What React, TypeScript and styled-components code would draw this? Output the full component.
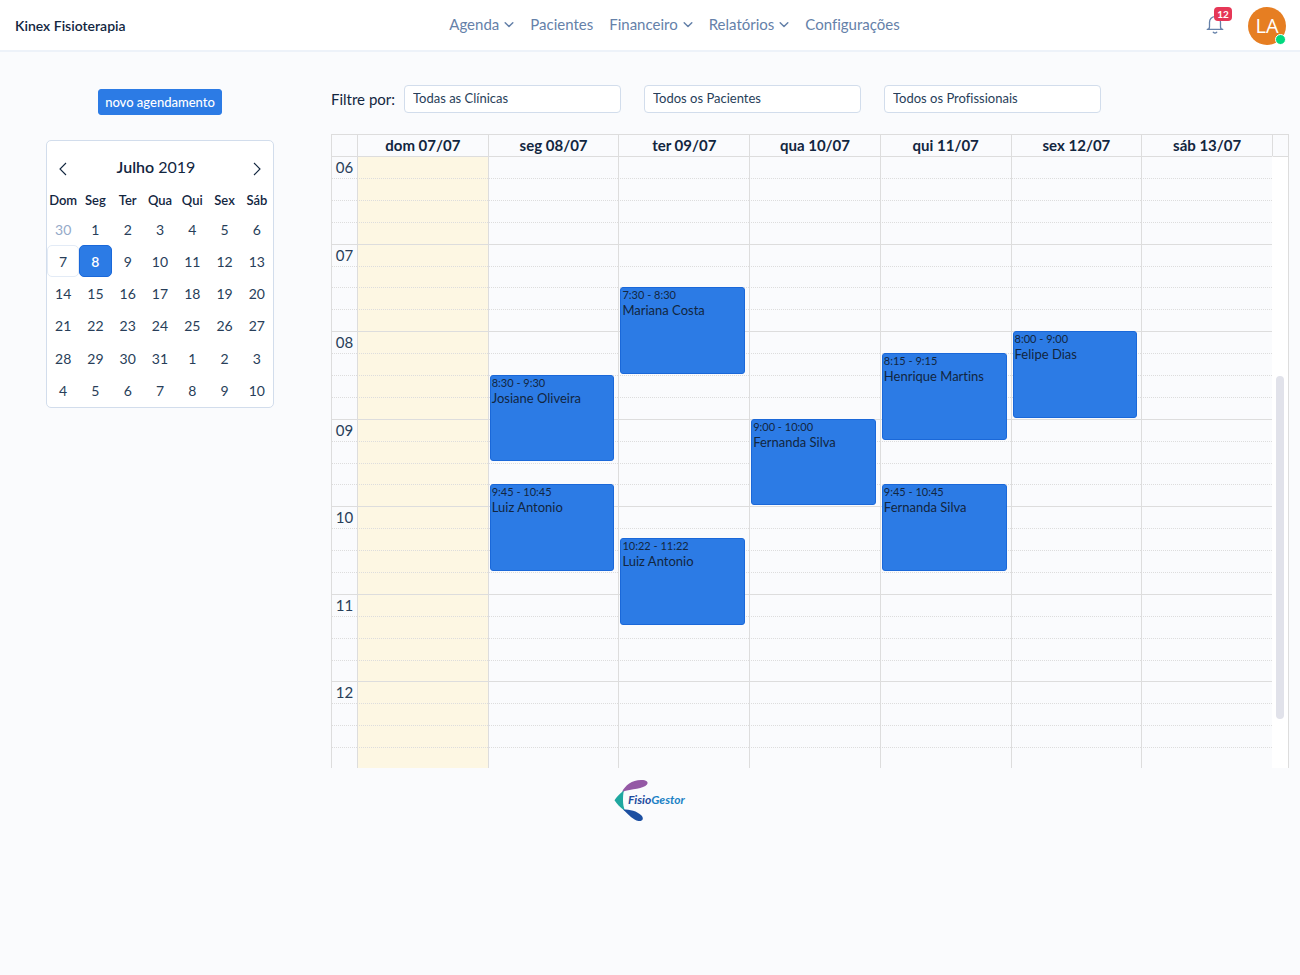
import React from "react";
import styled, { createGlobalStyle, css } from "styled-components";

const ink = "#12263f";
const inkSoft = "#283e59";
const blue = "#2c7be5";
const gridLine = "#dddddd";
const fieldBorder = "#d2ddec";

const GlobalStyle = createGlobalStyle`
  *, *::before, *::after { box-sizing: border-box; }
  body {
    margin: 0;
    background: #fafbfd;
    color: ${ink};
    font-family: Lato, "Open Sans", sans-serif;
    font-size: 15px;
    font-variant-ligatures: none;
    line-height: 20px;
  }
  button, select { font: inherit; color: inherit; }
`;

/* ---------- top bar ---------- */

const TopBar = styled.header`
  display: grid;
  grid-template-columns: 1fr auto 1fr;
  align-items: center;
  height: 52px;
  padding: 0 14px 0 15px;
  background: #fff;
  border-bottom: 2px solid #edf2f9;
`;

const Brand = styled.a`
  color: ${ink};
  font-size: 14px;
  font-weight: 600;
  text-decoration: none;
`;

const Nav = styled.nav`
  display: flex;
  gap: 16px;
  margin-left: 48px;
  padding-bottom: 2px;
`;

const NavLink = styled.a`
  display: flex;
  align-items: center;
  gap: 5px;
  color: #6581a9;
  text-decoration: none;
`;

const Account = styled.div`
  display: flex;
  justify-content: flex-end;
  align-items: center;
  gap: 24px;
  padding-top: 2px;
`;

const BellButton = styled.button`
  position: relative;
  display: flex;
  margin-bottom: 4px;
  padding: 0;
  border: 0;
  background: none;
  color: #6581a9;
`;

const BellCount = styled.span`
  position: absolute;
  top: -7px;
  right: -8px;
  width: 18px;
  height: 14px;
  border-radius: 4px;
  background: #e63757;
  color: #fff;
  font-size: 10px;
  font-weight: 700;
  line-height: 14px;
  text-align: center;
`;

const Avatar = styled.button`
  position: relative;
  width: 38px;
  height: 38px;
  padding: 0;
  border: 0;
  border-radius: 50%;
  background: #e67e22;
  color: #fff;
  font-family: "Open Sans", sans-serif;
  font-size: 20px;
  line-height: 38px;
`;

const Online = styled.span`
  position: absolute;
  right: 0;
  bottom: 0;
  width: 11px;
  height: 11px;
  border: 1px solid #fff;
  border-radius: 50%;
  background: #00d97e;
`;

/* ---------- page ---------- */

const Page = styled.div`
  display: grid;
  grid-template-columns: 320px minmax(0, 1fr);
  padding-top: 33px;
`;

const Sidebar = styled.aside`
  display: flex;
  flex-direction: column;
  align-items: center;
  gap: 25px;
  padding: 4px 46px 0;
`;

const NewButton = styled.button`
  height: 26px;
  padding: 0 6px 1px;
  border: 1px solid ${blue};
  border-radius: 3px;
  background: ${blue};
  color: #fff;
  font-size: 13px;
  font-weight: 500;
  line-height: 22px;
`;

const MiniCalendar = styled.section`
  width: 100%;
  border: 1px solid ${fieldBorder};
  border-radius: 5px;
  background: #fff;
`;

const MonthBar = styled.div`
  display: flex;
  justify-content: space-between;
  align-items: center;
  height: 47px;
  padding: 6px 11px 0;
`;

const MonthTitle = styled.h2`
  margin: 0;
  padding: 0 8px 2px 0;
  font-size: 16px;
  font-weight: 400;

  b { font-weight: 600; }
`;

const MonthArrow = styled.button`
  display: flex;
  padding: 3px 0 0;
  border: 0;
  background: none;
`;

const MonthTable = styled.table`
  display: block;
  color: ${inkSoft};
  font-size: 14px;

  tr {
    display: grid;
    grid-template-columns: repeat(7, 1fr);
  }
  th {
    padding: 0;
    color: ${ink};
    font-size: 13px;
    font-weight: 600;
    line-height: 24px;
  }
  thead, tbody { display: grid; }
  tbody {
    grid-template-rows: repeat(6, 1fr);
    height: 195px;
    padding-top: 1px;
  }
  td { padding: 0; }
`;

const Day = styled.button<{ $kind?: "muted" | "outlined" | "selected" }>`
  width: 100%;
  height: 32px;
  padding: 1px 0 0;
  border: 1px solid transparent;
  border-radius: 5px;
  background: none;
  ${({ $kind }) => $kind === "muted" && css`color: #95aac9;`}
  ${({ $kind }) => $kind === "outlined" && css`border-color: #e3ebf6;`}
  ${({ $kind }) =>
    $kind === "selected" &&
    css`
      border-color: #1a68d9;
      background: ${blue};
      color: #fff;
      font-weight: 600;
    `}
`;

const Main = styled.main`
  display: grid;
  gap: 21px;
  padding: 0 11px;
`;

const Filters = styled.form`
  display: flex;
  align-items: center;
  gap: 23px;
`;

const FilterLabel = styled.label`
  width: 50px;
  white-space: nowrap;
`;

const Filter = styled.select`
  flex: 0 1 217px;
  min-width: 0;
  height: 28px;
  padding: 0 8px 2px;
  border: 1px solid ${fieldBorder};
  border-radius: 4px;
  appearance: none;
  background: #fff;
  color: ${inkSoft};
  font-size: 13px;
`;

/* ---------- week schedule ---------- */

const axisWidth = 26;
const gutterWidth = 17;

const Schedule = styled.div`
  height: 634px;
  overflow: hidden;
  border-right: 1px solid ${gridLine};
`;

const ScheduleBody = styled.div`
  position: relative;
`;

const weekRow = css`
  display: grid;
  grid-template-columns: ${axisWidth}px repeat(7, minmax(0, 1fr)) ${gutterWidth - 1}px;
`;

const WeekTable = styled.table`
  display: block;

  tr { ${weekRow} }
  th, td {
    padding: 0;
    border-left: 1px solid ${gridLine};
  }
  thead { display: block; }
  thead th, thead td {
    height: 22px;
    border-top: 1px solid ${gridLine};
    font-weight: 700;
    line-height: 20px;
  }
  tbody {
    display: grid;
    grid-template-rows: repeat(28, 1fr);
    height: 613px;
  }
`;

const Slot = styled.td<{ $hour: boolean; $today?: boolean }>`
  border-top: 1px ${({ $hour }) => ($hour ? "solid" : "dotted")} ${gridLine};
  background: ${({ $today }) => ($today ? "#fdf7e3" : "transparent")};
`;

const Hour = styled.th<{ $hour: boolean }>`
  border-top: 1px ${({ $hour }) => ($hour ? "solid" : "dotted")} ${gridLine};
  color: ${inkSoft};
  font-weight: 400;
  line-height: 21px;
  text-align: center;
`;

const Gutter = styled.td<{ $first: boolean }>`
  && { border-left-color: #fff; }
  border-top: 1px solid ${({ $first }) => ($first ? gridLine : "#fff")};
  background: #fff;
`;

const Events = styled.div`
  position: absolute;
  inset: auto 0 0;
  height: 613px;
  ${weekRow}
  pointer-events: none;
`;

const EventColumn = styled.div<{ $day: number }>`
  position: relative;
  grid-row: 1;
  grid-column: ${({ $day }) => $day + 2};
`;

const EventCard = styled.a`
  position: absolute;
  left: 2px;
  right: 4px;
  padding: 0 1px;
  border: 1px solid #1a68d9;
  border-radius: 3px;
  background: ${blue};
  color: #12263f;
  font-size: 13px;
  line-height: 16px;
  text-decoration: none;
  pointer-events: auto;

  time {
    display: block;
    font-size: 11px;
    line-height: 14px;
  }
`;

const ScrollThumb = styled.div`
  position: absolute;
  top: 242px;
  right: 4px;
  width: 8px;
  height: 343px;
  border-radius: 4px;
  background: #e1e2ea;
`;

const Footer = styled.footer`
  display: flex;
  justify-content: center;
  padding-top: 10px;
`;

/* ---------- drawings ---------- */

const Chevron = () => (
  <svg width="10" height="10" viewBox="0 0 10 10" fill="none" stroke="currentColor" strokeWidth="1.5" strokeLinecap="round" strokeLinejoin="round" aria-hidden="true">
    <path d="M1.2 3.7 5 7.5l3.8-3.8" />
  </svg>
);

const Arrow = ({ back }: { back?: boolean }) => (
  <svg width="10" height="14" viewBox="0 0 10 14" fill="none" stroke={ink} strokeWidth="1.1" aria-hidden="true">
    <path d={back ? "M8 1 2 7l6 6" : "M2 1l6 6-6 6"} />
  </svg>
);

const Bell = () => (
  <svg width="18" height="20" viewBox="0 0 18 20" fill="none" stroke="currentColor" strokeWidth="1.3" strokeLinecap="round" strokeLinejoin="round" aria-hidden="true">
    <path d="M1.2 15.3h15.6c-1.5 0-2.300-.9-2.300-2.500V8.200a5.500 5.500 0 0 0-11 0v4.600c0 1.600-.8 2.500-2.300 2.500Z" />
    <path d="M7.3 18.2c.9.9 2.500.9 3.400 0" />
  </svg>
);

const Logo = () => (
  <svg width="72" height="44" viewBox="0 0 72 44" role="img" aria-label="FisioGestor">
    <path d="M8 14C11 7.500 18 2 27 2c5-.1 8 2 6 4.500C29.500 11 18 10.500 8 14Z" fill="#9458a5" />
    <path d="M10 12.500C6 15.500 2.500 19 .5 22.300 3 26 6 29.500 11 33 9.500 29 9 25.500 9 22.500S9 16 10 12.500Z" fill="#1fa7a0" />
    <path d="M9 31.500c7 0 14 1.500 18.500 6 2.500 3 1.500 6-3 5.500C19 42 15 37 9 31.500Z" fill="#1c4fa1" />
    <text x="14" y="26" fontFamily="Lato, sans-serif" fontSize="12" fontStyle="italic" fontWeight="700" fill="#1d4b9f">
      Fisio<tspan fill="#1b82c5">Gestor</tspan>
    </text>
  </svg>
);

/* ---------- data ---------- */

const navItems = [
  { label: "Agenda", menu: true },
  { label: "Pacientes", menu: false },
  { label: "Financeiro", menu: true },
  { label: "Relatórios", menu: true },
  { label: "Configurações", menu: false },
];

const filters = ["Todas as Clínicas", "Todos os Pacientes", "Todos os Profissionais"];

const weekdays = ["Dom", "Seg", "Ter", "Qua", "Qui", "Sex", "Sáb"];
const weeks = [
  [30, 1, 2, 3, 4, 5, 6],
  [7, 8, 9, 10, 11, 12, 13],
  [14, 15, 16, 17, 18, 19, 20],
  [21, 22, 23, 24, 25, 26, 27],
  [28, 29, 30, 31, 1, 2, 3],
  [4, 5, 6, 7, 8, 9, 10],
];

const days = ["dom 07/07", "seg 08/07", "ter 09/07", "qua 10/07", "qui 11/07", "sex 12/07", "sáb 13/07"];

const firstHour = 6;
const hoursShown = 7;

const appointments = [
  { day: 1, start: "8:30", end: "9:30", name: "Josiane Oliveira" },
  { day: 1, start: "9:45", end: "10:45", name: "Luiz Antonio" },
  { day: 2, start: "7:30", end: "8:30", name: "Mariana Costa" },
  { day: 2, start: "10:22", end: "11:22", name: "Luiz Antonio" },
  { day: 3, start: "9:00", end: "10:00", name: "Fernanda Silva" },
  { day: 4, start: "8:15", end: "9:15", name: "Henrique Martins" },
  { day: 4, start: "9:45", end: "10:45", name: "Fernanda Silva" },
  { day: 5, start: "8:00", end: "9:00", name: "Felipe Dias" },
];

const offset = (time: string) => {
  const [h, m] = time.split(":").map(Number);
  return ((h - firstHour + m / 60) / hoursShown) * 100;
};

const dayKind = (week: number, day: number) => {
  if (week === 0 && day === 30) return "muted" as const;
  if (week === 1 && day === 7) return "outlined" as const;
  if (week === 1 && day === 8) return "selected" as const;
  return undefined;
};

export default function App() {
  return (
    <>
      <GlobalStyle />
      <TopBar>
        <div><Brand href="#">Kinex Fisioterapia</Brand></div>
        <Nav>
          {navItems.map(({ label, menu }) => (
            <NavLink href="#" key={label}>{label}{menu && <Chevron />}</NavLink>
          ))}
        </Nav>
        <Account>
          <BellButton type="button" aria-label="Notificações">
            <Bell />
            <BellCount>12</BellCount>
          </BellButton>
          <Avatar type="button">LA<Online /></Avatar>
        </Account>
      </TopBar>

      <Page>
        <Sidebar>
          <NewButton type="button">novo agendamento</NewButton>
          <MiniCalendar>
            <MonthBar>
              <MonthArrow type="button" aria-label="Mês anterior"><Arrow back /></MonthArrow>
              <MonthTitle><b>Julho</b> 2019</MonthTitle>
              <MonthArrow type="button" aria-label="Próximo mês"><Arrow /></MonthArrow>
            </MonthBar>
            <MonthTable>
              <thead>
                <tr>{weekdays.map((d) => <th key={d} scope="col">{d}</th>)}</tr>
              </thead>
              <tbody>
                {weeks.map((week, w) => (
                  <tr key={w}>
                    {week.map((d) => (
                      <td key={d}><Day type="button" $kind={dayKind(w, d)}>{d}</Day></td>
                    ))}
                  </tr>
                ))}
              </tbody>
            </MonthTable>
          </MiniCalendar>
        </Sidebar>

        <Main>
          <Filters>
            <FilterLabel htmlFor="filter-0">Filtre por:</FilterLabel>
            {filters.map((f, i) => (
              <Filter key={f} id={`filter-${i}`} aria-label={f}><option>{f}</option></Filter>
            ))}
          </Filters>

          <Schedule>
            <ScheduleBody>
              <WeekTable>
                <thead>
                  <tr>
                    <td />
                    {days.map((d) => <th key={d} scope="col">{d}</th>)}
                    <td />
                  </tr>
                </thead>
                <tbody>
                  {Array.from({ length: hoursShown * 4 }, (_, s) => {
                    const onHour = s % 4 === 0;
                    return (
                      <tr key={s}>
                        <Hour $hour={onHour} scope="row">
                          {onHour ? String(firstHour + s / 4).padStart(2, "0") : null}
                        </Hour>
                        {days.map((d, i) => <Slot key={d} $hour={onHour} $today={i === 0} />)}
                        <Gutter $first={s === 0} />
                      </tr>
                    );
                  })}
                </tbody>
              </WeekTable>
              <Events>
                {days.map((d, i) => (
                  <EventColumn key={d} $day={i}>
                    {appointments.filter((a) => a.day === i).map((a) => (
                      <EventCard
                        href="#"
                        key={a.start}
                        style={{
                          top: `${offset(a.start)}%`,
                          height: `calc(${offset(a.end) - offset(a.start)}% - 1px)`,
                        }}
                      >
                        <time>{a.start} - {a.end}</time>
                        {a.name}
                      </EventCard>
                    ))}
                  </EventColumn>
                ))}
              </Events>
              <ScrollThumb />
            </ScheduleBody>
          </Schedule>
        </Main>
      </Page>

      <Footer><Logo /></Footer>
    </>
  );
}
